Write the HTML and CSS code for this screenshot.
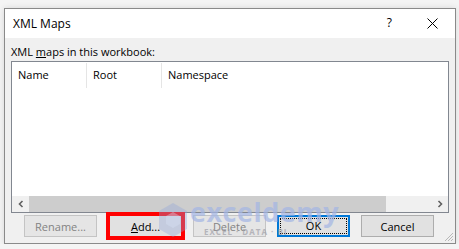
FILE: index.html
```html
<!DOCTYPE html>
<html lang="en">
<head>
  <meta charset="UTF-8">
  <title>XML Maps</title>
  <link rel="stylesheet" href="styles.css">
</head>
<body>
  <div class="dialog">
    <div class="titlebar">
      <span class="title">XML Maps</span>
      <span class="help">?</span>
      <svg class="close" width="11" height="11" viewBox="0 0 11 11">
        <path d="M0.5 0.5 L10.5 10.5 M10.5 0.5 L0.5 10.5" stroke="#000" stroke-width="1"/>
      </svg>
    </div>

    <div class="body">
      <div class="label">XML <u>m</u>aps in this workbook:</div>

      <div class="listbox">
        <div class="header">
          <div class="col col-name">Name</div>
          <div class="col col-root">Root</div>
          <div class="col col-ns">Namespace</div>
        </div>
        <div class="rows"></div>
        <div class="hscroll">
          <div class="arrow">
            <svg width="8" height="8" viewBox="0 0 8 8"><path d="M5.5 1 L2.5 4 L5.5 7" fill="none" stroke="#606060" stroke-width="1.6"/></svg>
          </div>
          <div class="thumb"></div>
          <div class="track"></div>
          <div class="arrow">
            <svg width="8" height="8" viewBox="0 0 8 8"><path d="M2.5 1 L5.5 4 L2.5 7" fill="none" stroke="#606060" stroke-width="1.6"/></svg>
          </div>
        </div>
      </div>

      <div class="buttons">
        <button class="btn disabled">Rename...</button>
        <button class="btn marked"><u>A</u>dd...</button>
        <button class="btn disabled">Delete</button>
        <button class="btn default"><span class="focus">OK</span></button>
        <button class="btn">Cancel</button>
      </div>
    </div>

    <svg class="grip" width="10" height="10" viewBox="0 0 10 10">
      <path d="M9 1 L1 9 M9 4 L4 9 M9 7 L7 9" stroke="#b8b8b8" stroke-width="1"/>
    </svg>
  </div>

  <div class="watermark">
    <svg class="wm-logo" width="30" height="36" viewBox="0 0 30 36">
      <polygon points="15,1 29,9 29,27 15,35 1,27 1,9" fill="#8fa6dc" opacity="0.5"/>
      <polygon points="15,10 22,14 22,22 15,26 8,22 8,14" fill="#c9d4ef" opacity="0.7"/>
    </svg>
    <div class="wm-text">
      <div class="wm-name">exceldemy</div>
      <div class="wm-tag">EXCEL · DATA · BI</div>
    </div>
  </div>
</body>
</html>
```

FILE: styles.css
```css
body {
  margin: 0;
  background: #f4f4f4;
  font-family: "Open Sans", "Noto Sans", sans-serif;
  font-size: 11px;
  color: #000;
}
.dialog {
  position: relative;
  box-sizing: border-box;
  width: 452px;
  height: 236px;
  margin: 8px 0 0 4px;
  border: 1px solid #8a8a8a;
  background: #f0f0f0;
  box-shadow: 0 0 6px rgba(0,0,0,0.12);
  display: flex;
  flex-direction: column;
}
.titlebar {
  height: 29px;
  background: #fff;
  display: flex;
  align-items: center;
  padding: 0 17px 0 8px;
}
.title {
  font-size: 12px;
  flex: 1;
  margin-top: -1px;
}
.help {
  font-size: 12px;
  margin-right: 35px;
  margin-top: -2px;
}
.close {
  margin-top: -1px;
}
.body {
  flex: 1;
  padding: 5px 6px 0 6px;
}
.label {
  line-height: 17px;
}
.listbox {
  box-sizing: border-box;
  width: 438px;
  height: 152px;
  margin-top: 1px;
  border: 1px solid #828790;
  background: #fff;
  display: flex;
  flex-direction: column;
}
.header {
  display: flex;
  height: 25px;
  padding-top: 1px;
}
.col {
  box-sizing: border-box;
  padding-left: 6px;
  line-height: 24px;
  border-right: 1px solid #e5e5e5;
}
.col-name {
  width: 75px;
}
.col-root {
  width: 75px;
}
.col-ns {
  border-right: none;
}
.rows {
  flex: 1;
}
.hscroll {
  display: flex;
  height: 16px;
  background: #f0f0f0;
}
.arrow {
  width: 17px;
  display: flex;
  align-items: center;
  justify-content: center;
}
.thumb {
  width: 357px;
  background: #cdcdcd;
}
.track {
  flex: 1;
}
.buttons {
  display: flex;
  gap: 11px;
  padding-left: 13px;
  margin-top: 2px;
}
.btn {
  box-sizing: border-box;
  width: 73px;
  height: 22px;
  background: #e1e1e1;
  border: 1px solid #adadad;
  font-family: "Open Sans", "Noto Sans", sans-serif;
  font-size: 11px;
  color: #000;
  padding: 0;
}
.btn.disabled {
  background: #e5e5e5;
  border-color: #c4c4c4;
  color: #838383;
}
.btn.marked {
  outline: 4px solid #ff0000;
  outline-offset: -1px;
  margin-left: 1px;
}
.btn.default {
  border: 2px solid #0078d7;
  padding: 1px;
}
.focus {
  display: block;
  height: 100%;
  box-sizing: border-box;
  border: 1px dotted #000;
  line-height: 14px;
}
.grip {
  position: absolute;
  right: 1px;
  bottom: 1px;
}
.watermark {
  position: absolute;
  left: 158px;
  top: 200px;
  display: flex;
  align-items: flex-start;
  opacity: 0.7;
  pointer-events: none;
}
.wm-logo {
  margin-top: 2px;
}
.wm-text {
  margin-left: 2px;
}
.wm-name {
  font-family: "Open Sans", sans-serif;
  font-weight: 700;
  font-size: 27px;
  line-height: 24px;
  color: #a3b5e4;
  letter-spacing: 0.5px;
}
.wm-tag {
  font-size: 8px;
  font-weight: 700;
  color: #a0a0a8;
  letter-spacing: 1px;
  margin-left: 14px;
  margin-top: 2px;
}
```
